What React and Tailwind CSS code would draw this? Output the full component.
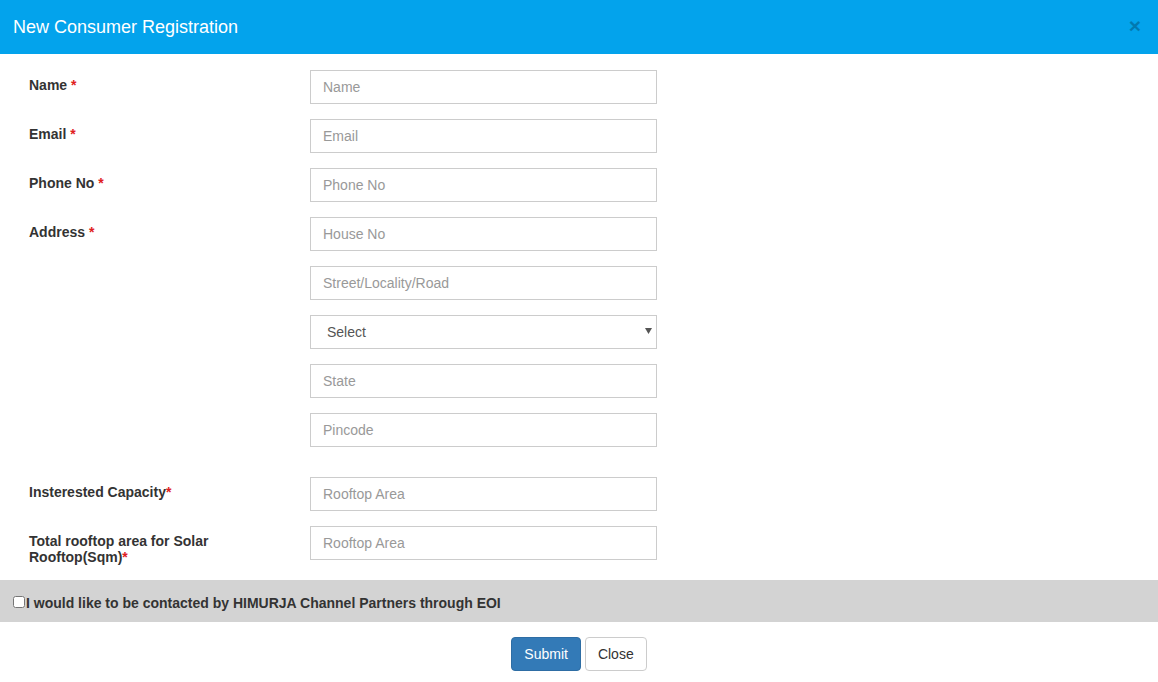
import { useState } from 'react';

const font = { fontFamily: '"Liberation Sans", Arial, sans-serif' };

function Field({ placeholder }) {
  return (
    <input
      type="text"
      placeholder={placeholder}
      className="w-[347px] h-[34px] border border-[#cccccc] bg-white px-[12px] text-[14px] text-[#555] placeholder:text-[#999] outline-none"
    />
  );
}

function Row({ label, required, tight, children }) {
  return (
    <div className="flex">
      <div className="w-[281px] shrink-0 pt-[7px]">
        <label className="block w-[230px] text-[14px] leading-4 font-bold text-[#333]">
          {label}
          {required && <span className="text-[#e02020]">{tight ? '*' : ' *'}</span>}
        </label>
      </div>
      <div className="flex flex-col gap-[15px]">{children}</div>
    </div>
  );
}

export default function App() {
  const [contact, setContact] = useState(false);

  return (
    <div className="w-[1158px] h-[682px] bg-white overflow-hidden" style={font}>
      <div className="h-[54px] bg-[#03a3ec] flex items-center justify-between pl-[13px] pr-[17px]">
        <h4 className="text-white text-[18px] leading-none">New Consumer Registration</h4>
        <button className="text-[21px] font-bold leading-none text-black opacity-25 -mt-[4px]">×</button>
      </div>

      <div className="pl-[29px] pt-[16px] pb-[15px] flex flex-col gap-[15px]">
        <Row label="Name" required>
          <Field placeholder="Name" />
        </Row>
        <Row label="Email" required>
          <Field placeholder="Email" />
        </Row>
        <Row label="Phone No" required>
          <Field placeholder="Phone No" />
        </Row>
        <Row label="Address" required>
          <Field placeholder="House No" />
          <Field placeholder="Street/Locality/Road" />
          <div className="relative w-[347px] h-[34px]">
            <select className="w-full h-full appearance-none border border-[#cccccc] bg-white pl-[16px] text-[14px] text-[#555] outline-none">
              <option>Select</option>
            </select>
            <svg className="absolute right-[5px] top-[13px]" width="7" height="6" viewBox="0 0 7 6">
              <path d="M0 0h7L3.5 6z" fill="#555" />
            </svg>
          </div>
          <Field placeholder="State" />
          <Field placeholder="Pincode" />
        </Row>
        <div className="h-0" />
        <Row label="Insterested Capacity" required tight>
          <Field placeholder="Rooftop Area" />
        </Row>
        <Row label="Total rooftop area for Solar Rooftop(Sqm)" required tight>
          <Field placeholder="Rooftop Area" />
        </Row>
      </div>

      <div className="h-[42px] bg-[#d3d3d3] flex items-center pl-[13px] pt-[5px]">
        <input
          type="checkbox"
          checked={contact}
          onChange={() => setContact(!contact)}
          className="w-[12px] h-[12px] m-0 -mt-[4px]"
        />
        <span className="ml-[1px] text-[14px] font-bold text-[#333]">
          I would like to be contacted by HIMURJA Channel Partners through EOI
        </span>
      </div>

      <div className="flex justify-center gap-[4px] pt-[15px]">
        <button className="h-[34px] px-[12px] rounded-[4px] bg-[#337ab7] border border-[#2e6da4] text-white text-[14px]">
          Submit
        </button>
        <button className="h-[34px] px-[12px] rounded-[4px] bg-white border border-[#cccccc] text-[#333] text-[14px]">
          Close
        </button>
      </div>
    </div>
  );
}
